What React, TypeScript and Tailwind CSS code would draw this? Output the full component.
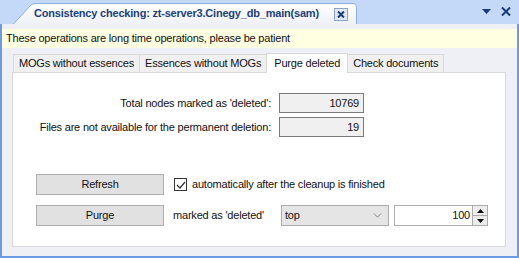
import { ChevronDown } from "lucide-react";

const labelFont = "font-['Liberation_Sans',Arial,sans-serif] text-[11px] tracking-[-0.2px]";

function ReadonlyBox({ value }: { value: string }) {
  return (
    <div className="w-[85px] h-[20px] border border-[#7a7a7a] bg-[#f0f0f0] flex items-center justify-end pr-[4px] text-[#111]">
      {value}
    </div>
  );
}

function Btn({ children }: { children: string }) {
  return (
    <button className="w-[128px] h-[21px] border border-[#adadad] bg-[#e1e1e1] text-[#111] flex items-center justify-center">
      {children}
    </button>
  );
}

export default function App() {
  const tabs = ["MOGs without essences", "Essences without MOGs", "Purge deleted", "Check documents"];

  return (
    <div className={`w-[519px] h-[258px] bg-[#c3d9f7] flex flex-col ${labelFont}`}>
      {/* document tab strip */}
      <div className="h-[24px] flex items-end relative">
        <div className="relative ml-[13px] h-[21px] w-[344px] flex items-center pl-[21px]">
          <svg className="absolute inset-0" width="344" height="21" viewBox="0 0 344 21">
            <defs>
              <linearGradient id="tabg" x1="0" y1="0" x2="0" y2="1">
                <stop offset="0" stopColor="#ffffff" />
                <stop offset="1" stopColor="#eef1f6" />
              </linearGradient>
            </defs>
            <path d="M0.5 21 L17 3 Q19 0.5 22 0.5 L340 0.5 Q343.5 0.5 343.5 4 L343.5 21" fill="url(#tabg)" stroke="#8eb0de" />
          </svg>
          <span className="relative font-bold text-[11px] text-[#1e3f78] tracking-[-0.2px]">
            Consistency checking: zt-server3.Cinegy_db_main(sam)
          </span>
          <div className="absolute right-[9px] top-[5px] w-[14px] h-[13px] border border-[#8ca4c8] bg-[#dfe8f5] flex items-center justify-center">
            <svg width="8" height="7" viewBox="0 0 8 7">
              <path d="M1 0.5 L7 6.5 M7 0.5 L1 6.5" stroke="#1a3a78" strokeWidth="2" />
            </svg>
          </div>
        </div>
        <div className="absolute right-[8px] top-[7px] flex items-center gap-[10px]">
          <svg width="9" height="5" viewBox="0 0 9 5">
            <path d="M0 0 L9 0 L4.5 5 Z" fill="#1b3c78" />
          </svg>
          <svg width="10" height="9" viewBox="0 0 10 9">
            <path d="M1 0.5 L9 8.5 M9 0.5 L1 8.5" stroke="#1b3c78" strokeWidth="2" />
          </svg>
        </div>
      </div>

      {/* content panel */}
      <div className="flex-1 border-x-[2px] border-b-[2px] border-[#6c9ae3] bg-[#eef0f5] flex flex-col pb-[9px]">
        <div className="mt-[5px] h-[19px] bg-[#ffffe1] flex items-center pl-[4px] text-[#111]">
          These operations are long time operations, please be patient
        </div>

        <div className="flex-1 flex flex-col pl-[10px] pr-[11px] pt-[4px]">
          {/* tabs */}
          <div className="flex items-end h-[20px] pl-[1px]">
            {tabs.map((t, i) => {
              const active = i === 2;
              return (
                <div
                  key={t}
                  className={
                    active
                      ? "h-[20px] px-[7px] flex items-center bg-white border border-b-0 border-[#d9d9d9] text-[#111] relative top-[1px] -ml-[1px] z-10"
                      : "h-[18px] px-[5px] flex items-center bg-[#f0f0f0] border border-b-0 border-[#d9d9d9] text-[#111] -ml-[1px] first:ml-0"
                  }
                >
                  {t}
                </div>
              );
            })}
          </div>

          {/* tab page */}
          <div className="flex-1 bg-white border border-[#d9d9d9] flex flex-col text-[#111]">
            <div className="mt-[20px] flex flex-col gap-[4px]">
              <div className="flex items-center gap-[8px]">
                <span className="w-[258px] text-right">Total nodes marked as 'deleted':</span>
                <ReadonlyBox value="10769" />
              </div>
              <div className="flex items-center gap-[8px]">
                <span className="w-[258px] text-right">Files are not available for the permanent deletion:</span>
                <ReadonlyBox value="19" />
              </div>
            </div>

            <div className="mt-[37px] flex flex-col gap-[10px] pl-[23px]">
              <div className="flex items-center">
                <Btn>Refresh</Btn>
                <div className="ml-[10px] w-[13px] h-[13px] border border-[#333] bg-white flex items-center justify-center">
                  <svg width="10" height="8" viewBox="0 0 10 8">
                    <path d="M1 4 L4 7 L9 1" fill="none" stroke="#333" strokeWidth="1.3" />
                  </svg>
                </div>
                <span className="ml-[5px]">automatically after the cleanup is finished</span>
              </div>
              <div className="flex items-center">
                <Btn>Purge</Btn>
                <span className="ml-[9px] w-[108px]">marked as 'deleted'</span>
                <div className="w-[108px] h-[21px] border border-[#acacac] bg-[#e5e5e5] flex items-center justify-between pl-[3px] pr-[4px]">
                  <span>top</span>
                  <ChevronDown size={13} strokeWidth={1.2} color="#555" />
                </div>
                <div className="ml-[5px] w-[94px] h-[21px] border border-[#acacac] bg-white flex items-center">
                  <span className="flex-1 text-right pr-[2px]">100</span>
                  <div className="w-[15px] h-[19px] border-l border-[#acacac] flex flex-col">
                    <div className="flex-1 bg-[#ececec] border-b border-[#acacac] flex items-center justify-center">
                      <svg width="7" height="4" viewBox="0 0 7 4"><path d="M0 4 L3.5 0 L7 4 Z" fill="#111" /></svg>
                    </div>
                    <div className="flex-1 bg-[#ececec] flex items-center justify-center">
                      <svg width="7" height="4" viewBox="0 0 7 4"><path d="M0 0 L3.5 4 L7 0 Z" fill="#111" /></svg>
                    </div>
                  </div>
                </div>
              </div>
            </div>
          </div>
        </div>
      </div>
    </div>
  );
}
